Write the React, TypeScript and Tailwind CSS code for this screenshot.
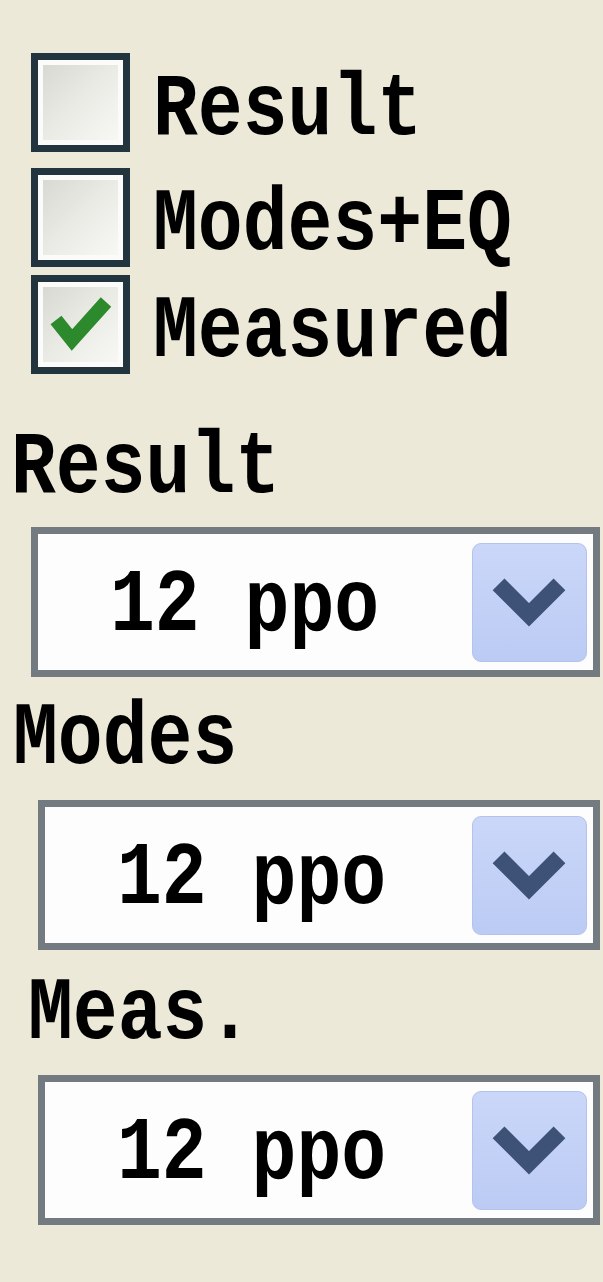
import React from "react";

const txt =
  "inline-block origin-left scale-x-[0.84] text-[89px] leading-none font-bold text-black whitespace-pre";

function Box({ checked }: { checked?: boolean }) {
  return (
    <div className="w-[99px] h-[99px] shrink-0 border-[7px] border-[#22343e] bg-[#fbfbfa] p-[5px]">
      <div className="w-full h-full bg-linear-to-br from-[#d9d9d3] via-[#ebebe6] to-[#f7f7f4]">
        {checked && (
          <svg viewBox="0 0 75 75" className="w-full h-full">
            <polyline
              points="13,33 29,53 63,15"
              fill="none"
              stroke="#2c8a2c"
              strokeWidth="14"
              strokeLinejoin="miter"
            />
          </svg>
        )}
      </div>
    </div>
  );
}

function Row({ label, checked, className = "" }: { label: string; checked?: boolean; className?: string }) {
  return (
    <div className={"flex items-start h-[99px] " + className}>
      <Box checked={checked} />
      <div className="flex ml-[23px] mt-[13px]">
        <span className={txt}>{label}</span>
      </div>
    </div>
  );
}

function Select({ className = "" }: { className?: string }) {
  return (
    <div className={"flex h-[150px] border-[7px] border-[#737b81] bg-[#fdfdfd] " + className}>
      <div className="flex self-start mt-[28px] ml-[72px]">
        <span className={txt}>12 ppo</span>
      </div>
      <div className="ml-auto mr-[6px] self-center w-[115px] h-[119px] rounded-[9px] border border-[#b3c3ec] bg-linear-to-b from-[#cad7f9] to-[#bccbf4]">
        <svg viewBox="0 0 115 119" className="w-full h-full">
          <polyline
            points="26,41 57,72 88,41"
            fill="none"
            stroke="#3e5277"
            strokeWidth="17"
            strokeLinejoin="miter"
          />
        </svg>
      </div>
    </div>
  );
}

function Label({ text, className = "" }: { text: string; className?: string }) {
  return (
    <div className={"flex " + className}>
      <span className={txt}>{text}</span>
    </div>
  );
}

export default function App() {
  return (
    <div className="w-[603px] h-[1282px] overflow-hidden bg-[#ece9d8] font-['Liberation_Mono',monospace]">
      <div className="pt-[53px] pl-[31px] flex flex-col">
        <Row label="Result" />
        <Row label="Modes+EQ" className="mt-[16px]" />
        <Row label="Measured" checked className="mt-[8px]" />
      </div>
      <Label text="Result" className="mt-[50px] pl-[11px]" />
      <Select className="mt-[14px] ml-[31px] w-[569px]" />
      <Label text="Modes" className="mt-[18px] pl-[13px]" />
      <Select className="mt-[16px] ml-[38px] w-[562px]" />
      <Label text="Meas." className="mt-[20px] pl-[28px]" />
      <Select className="mt-[16px] ml-[38px] w-[562px]" />
    </div>
  );
}
